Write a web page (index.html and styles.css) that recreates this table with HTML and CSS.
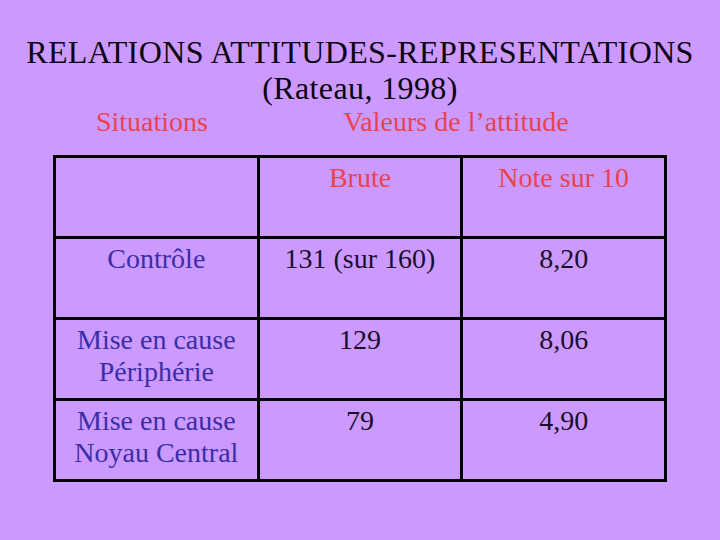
FILE: index.html
```html
<!DOCTYPE html>
<html>
<head>
<meta charset="utf-8">
<title>Relations attitudes-représentations</title>
<link rel="stylesheet" href="styles.css">
</head>
<body>
<div class="slide">
  <h1 class="title">RELATIONS ATTITUDES-REPRESENTATIONS<br>(Rateau, 1998)</h1>
  <div class="heads">
    <div class="head head-sit">Situations</div>
    <div class="head head-val">Valeurs de l’attitude</div>
  </div>
  <table class="grid">
    <tr>
      <td></td>
      <td class="red">Brute</td>
      <td class="red">Note sur 10</td>
    </tr>
    <tr>
      <td class="blue">Contrôle</td>
      <td>131 (sur 160)</td>
      <td>8,20</td>
    </tr>
    <tr>
      <td class="blue">Mise en cause<br>Périphérie</td>
      <td>129</td>
      <td>8,06</td>
    </tr>
    <tr>
      <td class="blue">Mise en cause<br>Noyau Central</td>
      <td>79</td>
      <td>4,90</td>
    </tr>
  </table>
</div>
</body>
</html>
```
FILE: styles.css
```css
html, body {
  margin: 0;
  padding: 0;
  background: #cc99ff;
  font-family: "Liberation Serif", serif;
}
.slide {
  width: 720px;
  height: 540px;
  color: #110818;
  padding-top: 34px;
  box-sizing: border-box;
}
.title {
  margin: 0;
  font-size: 32px;
  font-weight: normal;
  line-height: 36px;
  letter-spacing: 0.38px;
  text-align: center;
  color: #0a0510;
}
.heads {
  display: grid;
  grid-template-columns: 204px 408px;
  margin-left: 54px;
  font-size: 28px;
  line-height: 31px;
  color: #e8434e;
}
.head { text-align: center; }
.head-sit { padding-right: 8px; }
.head-val { padding-right: 12px; }
.grid {
  margin: 18px 0 0 53px;
  width: 614px;
  table-layout: fixed;
  border-collapse: collapse;
  font-size: 28px;
  line-height: 32px;
}
.grid td {
  border: 3px solid #000;
  height: 81px;
  box-sizing: border-box;
  vertical-align: top;
  text-align: center;
  padding: 4px 0 0;
  color: #1a0f2a;
}
.grid td.red { color: #e8434e; }
.grid td.blue { color: #3a2ea8; }
```
